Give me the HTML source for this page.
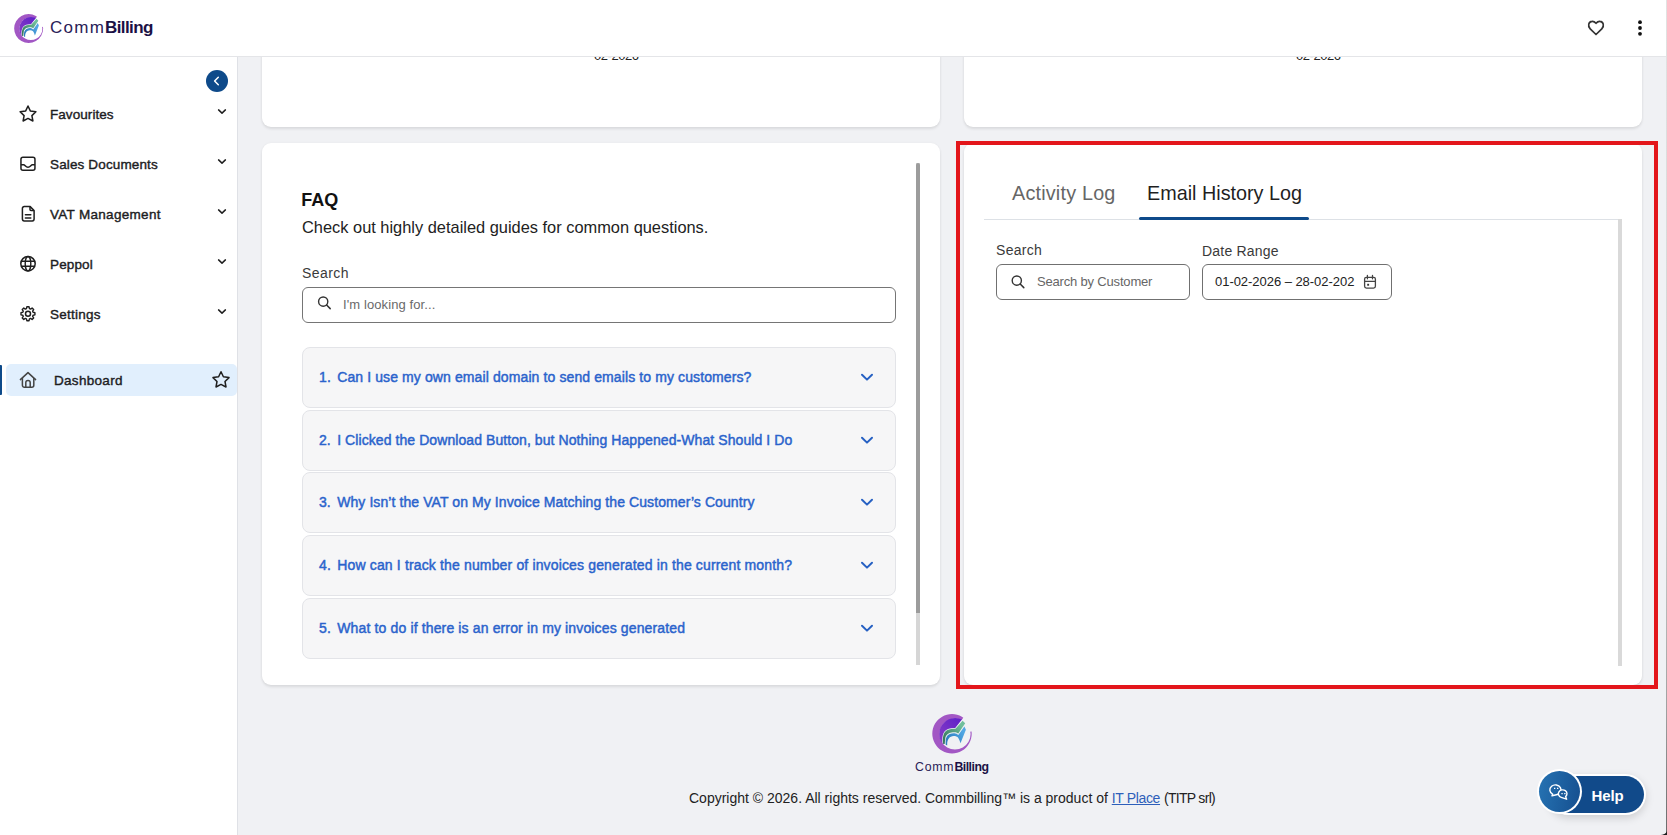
<!DOCTYPE html>
<html><head><meta charset="utf-8">
<style>
*{box-sizing:border-box;margin:0;padding:0}
html,body{width:1667px;height:835px;overflow:hidden;font-family:"Liberation Sans",sans-serif;background:#f0f1f4;color:#1f1f1f}
.abs{position:absolute}
.t{position:absolute;white-space:nowrap;line-height:1}
#hdr{position:absolute;left:0;top:0;width:1667px;height:57px;background:#fff;border-bottom:1px solid #e4e5e8;z-index:10}
#side{position:absolute;left:0;top:57px;width:238px;height:778px;background:#fff;border-right:1px solid #dfe1e6;z-index:5}
.card{position:absolute;background:#fff;border-radius:9px;box-shadow:0 2px 3px rgba(0,0,0,.09),0 0 3px rgba(0,0,0,.04)}
.st{font-size:13.5px;font-weight:normal;color:#1d1d1f;-webkit-text-stroke:0.4px #1d1d1f}
.faq{position:absolute;left:302px;width:594px;height:61px;background:#f6f6f7;border:1px solid #e3e4e8;border-radius:8px}
.q{font-size:14px;font-weight:normal;color:#2a63cc;-webkit-text-stroke:0.45px #2a63cc}
svg{position:absolute;overflow:visible}
</style></head>
<body>
<div id="hdr">
  <svg id="logo1" style="left:10.8px;top:10.5px" width="35.3" height="35.3" viewBox="0 0 48 48">
    <use href="#logo"/>
  </svg>
  <div class="t" id="brand" style="left:50px;top:18.8px;font-size:17px;color:#1b1145"><span style="letter-spacing:1.25px;color:#2a2157">Comm</span><b style="letter-spacing:-0.6px">Billing</b></div>
  <svg style="left:1580px;top:12px" width="32" height="32" viewBox="0 0 32 32"><path d="M16 22.5 L10.2 16.8 C7.4 14 8.6 9.6 12 9.3 C13.8 9.1 15 10.1 16 11.3 C17 10.1 18.2 9.1 20 9.3 C23.4 9.6 24.6 14 21.8 16.8 Z" fill="none" stroke="#333" stroke-width="1.7" stroke-linejoin="round"/></svg>
  <svg style="left:1630px;top:12px" width="20" height="32" viewBox="0 0 20 32"><circle cx="10" cy="10.2" r="1.9" fill="#111"/><circle cx="10" cy="16" r="1.9" fill="#111"/><circle cx="10" cy="21.8" r="1.9" fill="#111"/></svg>
</div>

<svg width="0" height="0" style="left:0;top:0">
  <defs>
    <linearGradient id="gdp" x1="0" y1="1" x2="1" y2="0"><stop offset="0" stop-color="#8a3fc6"/><stop offset="1" stop-color="#5d1fc8"/></linearGradient>
    <linearGradient id="ggr" x1="0.3" y1="0.9" x2="0.8" y2="0.2"><stop offset="0" stop-color="#3a7a60"/><stop offset="1" stop-color="#70bf9c"/></linearGradient>
    <linearGradient id="gbl" x1="0.2" y1="0.8" x2="0.9" y2="0.3"><stop offset="0" stop-color="#2f7fc0"/><stop offset="1" stop-color="#52a8e4"/></linearGradient>
    <mask id="mcut" maskUnits="userSpaceOnUse" x="0" y="0" width="48" height="48">
      <rect x="0" y="0" width="48" height="48" fill="#fff"/>
      <path d="M24 23.7 L47 -9 L70 -9 L70 18.5 Z" fill="#000"/>
    </mask>
    <g id="logo">
      <path mask="url(#mcut)" fill-rule="evenodd" fill="#a257c4" d="M24 4 A19.7 19.7 0 1 1 23.99 4 Z M27 8.4 A15.6 15.6 0 1 0 27.01 8.4 Z"/>
      <path fill="url(#gdp)" d="M33.9 9.57 A16 16 0 0 0 14.6 34 C14 31 13.9 24.3 16.9 21 C19.2 18.6 23.5 17.6 27.2 18 Z"/>
      <path fill="url(#ggr)" d="M15.2 34 C14.6 31 14.5 24.5 17.4 21.5 C19.5 19.3 24 18.4 27.5 18.8 L34.6 10.7 L37.2 13.2 L30.3 23.6 C28.8 22.6 27.6 22.1 26.4 22.2 C24.2 22.2 22.4 22.5 21 23.2 C18.6 24.6 17.4 26.5 17.4 27.6 C17.1 30 16.9 32 16.7 34 Z"/>
      <path fill="url(#gbl)" d="M17.7 34.7 C17.6 32 17.6 30 18.1 28.3 C18.8 26 20 24.8 21.7 24 C23.2 23.3 24.8 23.1 26.4 23.2 C28 23.4 29.3 24 30.3 25 L36.4 16.4 L37.9 19.7 L32.5 33.3 C31.8 30.8 31 29 30 27.6 C28.8 26.5 27.3 26 25.7 26.1 C23.6 26.2 22 27 21 28.3 C19.9 29.7 19.3 31.3 19.2 33 L19.2 35.5 Z"/>
    </g>
  </defs>
</svg>

<div id="side">
  <div class="abs" style="left:206px;top:13px;width:22px;height:22px;border-radius:50%;background:#0e4a8a"><svg style="left:0;top:0" width="22" height="22" viewBox="0 0 22 22"><path d="M12.3 7.2 L8.6 11 L12.3 14.8" stroke="#fff" stroke-width="1.5" fill="none" stroke-linecap="round" stroke-linejoin="round"/></svg></div>

  <!-- star -->
  <svg style="left:15px;top:43px" width="26" height="26" viewBox="0 0 26 26"><path d="M13 6 L15.3 10.9 L20.9 11.7 L16.9 15.6 L17.9 21 L13 18.4 L8.1 21 L9.1 15.6 L5.1 11.7 L10.7 10.9 Z" fill="none" stroke="#1f1f1f" stroke-width="1.5" stroke-linejoin="round"/></svg>
  <div class="t st" style="left:50px;top:51.3px;letter-spacing:0.06px">Favourites</div>
  <svg style="left:215px;top:50px" width="14" height="10" viewBox="0 0 14 10"><path d="M3.6 2.9 L7 6.1 L10.4 2.9" fill="none" stroke="#1f1f1f" stroke-width="1.5" stroke-linecap="round" stroke-linejoin="round"/></svg>

  <!-- inbox -->
  <svg style="left:15px;top:93px" width="26" height="26" viewBox="0 0 26 26"><rect x="5.95" y="7.25" width="14" height="13" rx="2" fill="none" stroke="#1f1f1f" stroke-width="1.5"/><path d="M5.95 14.7 H8.6 C10 14.7 10.6 17.3 13 17.3 C15.4 17.3 16 14.7 17.4 14.7 H19.95" fill="none" stroke="#1f1f1f" stroke-width="1.5"/></svg>
  <div class="t st" style="left:50px;top:101.3px;letter-spacing:0.14px">Sales Documents</div>
  <svg style="left:215px;top:100px" width="14" height="10" viewBox="0 0 14 10"><path d="M3.6 2.9 L7 6.1 L10.4 2.9" fill="none" stroke="#1f1f1f" stroke-width="1.5" stroke-linecap="round" stroke-linejoin="round"/></svg>

  <!-- doc -->
  <svg style="left:15px;top:143px" width="26" height="26" viewBox="0 0 26 26"><path d="M9 6.6 H15.2 L19.1 10.5 V19.1 A1.8 1.8 0 0 1 17.3 20.9 H9.2 A1.8 1.8 0 0 1 7.4 19.1 V8.4 A1.8 1.8 0 0 1 9.2 6.6 Z" fill="none" stroke="#1f1f1f" stroke-width="1.5" stroke-linejoin="round"/><path d="M15 6.8 V9.4 A1 1 0 0 0 16 10.4 H19" fill="none" stroke="#1f1f1f" stroke-width="1.5"/><path d="M10.4 14.8 H15.8 M10.4 18.1 H15.8" stroke="#1f1f1f" stroke-width="1.5" stroke-linecap="round"/></svg>
  <div class="t st" style="left:50px;top:151.3px;letter-spacing:0.30px">VAT Management</div>
  <svg style="left:215px;top:150px" width="14" height="10" viewBox="0 0 14 10"><path d="M3.6 2.9 L7 6.1 L10.4 2.9" fill="none" stroke="#1f1f1f" stroke-width="1.5" stroke-linecap="round" stroke-linejoin="round"/></svg>

  <!-- globe -->
  <svg style="left:15px;top:193px" width="26" height="26" viewBox="0 0 26 26"><circle cx="13" cy="13.7" r="7.2" fill="none" stroke="#1f1f1f" stroke-width="1.5"/><ellipse cx="13" cy="13.7" rx="2.8" ry="7.2" fill="none" stroke="#1f1f1f" stroke-width="1.4"/><path d="M6.2 11.2 H19.8 M6.2 16.3 H19.8" stroke="#1f1f1f" stroke-width="1.4"/></svg>
  <div class="t st" style="left:50px;top:201.3px;letter-spacing:0.14px">Peppol</div>
  <svg style="left:215px;top:200px" width="14" height="10" viewBox="0 0 14 10"><path d="M3.6 2.9 L7 6.1 L10.4 2.9" fill="none" stroke="#1f1f1f" stroke-width="1.5" stroke-linecap="round" stroke-linejoin="round"/></svg>

  <!-- gear -->
  <svg style="left:15px;top:243px" width="26" height="26" viewBox="0 0 26 26"><path d="M11.85 6.79 L14.05 6.79 L14.44 8.61 L15.53 9.06 L17.09 8.05 L18.65 9.61 L17.64 11.17 L18.09 12.26 L19.91 12.65 L19.91 14.85 L18.09 15.24 L17.64 16.33 L18.65 17.89 L17.09 19.45 L15.53 18.44 L14.44 18.89 L14.05 20.71 L11.85 20.71 L11.46 18.89 L10.37 18.44 L8.81 19.45 L7.25 17.89 L8.26 16.33 L7.81 15.24 L5.99 14.85 L5.99 12.65 L7.81 12.26 L8.26 11.17 L7.25 9.61 L8.81 8.05 L10.37 9.06 L11.46 8.61 Z" fill="none" stroke="#1f1f1f" stroke-width="1.4" stroke-linejoin="round"/><circle cx="13" cy="13.8" r="2.5" fill="none" stroke="#1f1f1f" stroke-width="1.5"/></svg>
  <div class="t st" style="left:50px;top:251.3px;letter-spacing:0.23px">Settings</div>
  <svg style="left:215px;top:250px" width="14" height="10" viewBox="0 0 14 10"><path d="M3.6 2.9 L7 6.1 L10.4 2.9" fill="none" stroke="#1f1f1f" stroke-width="1.5" stroke-linecap="round" stroke-linejoin="round"/></svg>

  <div class="abs" style="left:6px;top:307px;width:231px;height:32px;background:#e1effd;border-radius:5px"></div>
  <div class="abs" style="left:0;top:308px;width:2px;height:30px;background:#0e4a8a;border-radius:0 1px 1px 0"></div>
  <svg style="left:15px;top:309px" width="26" height="26" viewBox="0 0 26 26"><path d="M5.4 13.6 L13 6.6 L20.6 13.6" fill="none" stroke="#444" stroke-width="1.5" stroke-linecap="round" stroke-linejoin="round"/><path d="M7.4 12 V19.2 A2 2 0 0 0 9.4 21.2 H16.8 A2 2 0 0 0 18.8 19.2 V12" fill="none" stroke="#444" stroke-width="1.5"/><path d="M10.8 21.2 V16.6 A2.2 2.2 0 0 1 15.2 16.6 V21.2" fill="none" stroke="#444" stroke-width="1.5"/></svg>
  <div class="t st" style="left:54px;top:317.3px;letter-spacing:0.30px">Dashboard</div>
  <svg style="left:208px;top:309px" width="26" height="26" viewBox="0 0 26 26"><path d="M13 5.8 L15.4 10.8 L21 11.6 L17 15.5 L18 21 L13 18.4 L8 21 L9 15.5 L5 11.6 L10.6 10.8 Z" fill="none" stroke="#1f1f1f" stroke-width="1.5" stroke-linejoin="round"/></svg>
</div>

<!-- top cards -->
<div class="card" style="left:262px;top:0;width:678px;height:127px;overflow:hidden"><div class="t" style="left:332px;top:49px;font-size:13px;color:#222;letter-spacing:-0.45px">02-2026</div></div>
<div class="card" style="left:964px;top:0;width:678px;height:127px;overflow:hidden"><div class="t" style="left:332px;top:49px;font-size:13px;color:#222;letter-spacing:-0.45px">02-2026</div></div>

<!-- FAQ card -->
<div class="card" style="left:262px;top:143px;width:678px;height:542px"></div>
<div class="abs" style="left:916px;top:163px;width:4px;height:502px;background:#d6d6d6"></div>
<div class="abs" style="left:916px;top:163px;width:4px;height:450px;background:#9c9c9c;border-radius:2px 2px 0 0"></div>
<div class="t" style="left:301.2px;top:191px;font-size:18px;font-weight:bold;color:#111">FAQ</div>
<div class="t" style="left:302px;top:219px;font-size:16.4px;color:#222">Check out highly detailed guides for common questions.</div>
<div class="t" style="left:302px;top:266px;font-size:14px;color:#3a3a3a;letter-spacing:0.44px">Search</div>
<div class="abs" style="left:302px;top:287px;width:594px;height:36px;border:1px solid #757575;border-radius:6px"></div>
<svg style="left:310px;top:288px" width="30" height="30" viewBox="0 0 30 30"><circle cx="13.2" cy="13.6" r="4.6" fill="none" stroke="#333" stroke-width="1.4"/><path d="M16.6 17 L20.2 20.6" stroke="#333" stroke-width="1.5" stroke-linecap="round"/></svg>
<div class="t" style="left:343px;top:298px;font-size:13px;color:#6a6a6a;letter-spacing:0.1px">I'm looking for...</div>

<div class="faq" style="top:347px"></div>
<div class="faq" style="top:410px"></div>
<div class="faq" style="top:472px"></div>
<div class="faq" style="top:535px"></div>
<div class="faq" style="top:598px"></div>
<div class="t q" style="left:319px;top:370px;letter-spacing:0.108px">1.<span style="letter-spacing:-0.75px">&nbsp; </span>Can I use my own email domain to send emails to my customers?</div>
<div class="t q" style="left:319px;top:433px;letter-spacing:0.078px">2.<span style="letter-spacing:-0.75px">&nbsp; </span>I Clicked the Download Button, but Nothing Happened-What Should I Do</div>
<div class="t q" style="left:319px;top:495px;letter-spacing:0.088px">3.<span style="letter-spacing:-0.75px">&nbsp; </span>Why Isn’t the VAT on My Invoice Matching the Customer’s Country</div>
<div class="t q" style="left:319px;top:558px;letter-spacing:0.15px">4.<span style="letter-spacing:-0.75px">&nbsp; </span>How can I track the number of invoices generated in the current month?</div>
<div class="t q" style="left:319px;top:621px;letter-spacing:0.14px">5.<span style="letter-spacing:-0.75px">&nbsp; </span>What to do if there is an error in my invoices generated</div>
<svg style="left:857px;top:368px" width="20" height="20" viewBox="0 0 20 20"><path d="M5 6.8 L10 11.6 L15 6.8" fill="none" stroke="#2761c3" stroke-width="2" stroke-linecap="round" stroke-linejoin="round"/></svg>
<svg style="left:857px;top:431px" width="20" height="20" viewBox="0 0 20 20"><path d="M5 6.8 L10 11.6 L15 6.8" fill="none" stroke="#2761c3" stroke-width="2" stroke-linecap="round" stroke-linejoin="round"/></svg>
<svg style="left:857px;top:493px" width="20" height="20" viewBox="0 0 20 20"><path d="M5 6.8 L10 11.6 L15 6.8" fill="none" stroke="#2761c3" stroke-width="2" stroke-linecap="round" stroke-linejoin="round"/></svg>
<svg style="left:857px;top:556px" width="20" height="20" viewBox="0 0 20 20"><path d="M5 6.8 L10 11.6 L15 6.8" fill="none" stroke="#2761c3" stroke-width="2" stroke-linecap="round" stroke-linejoin="round"/></svg>
<svg style="left:857px;top:619px" width="20" height="20" viewBox="0 0 20 20"><path d="M5 6.8 L10 11.6 L15 6.8" fill="none" stroke="#2761c3" stroke-width="2" stroke-linecap="round" stroke-linejoin="round"/></svg>

<!-- Email card -->
<div class="card" style="left:964px;top:143px;width:678px;height:542px"></div>
<div class="abs" style="left:984px;top:219px;width:634px;height:1px;background:#dde1e6"></div>
<div class="abs" style="left:1618px;top:219px;width:4px;height:447px;background:#d9d9d9"></div>
<div class="t" style="left:1012px;top:183.7px;font-size:19.8px;color:#666;letter-spacing:0.2px">Activity Log</div>
<div class="t" style="left:1147px;top:183.7px;font-size:19.8px;color:#1f1f1f">Email History Log</div>
<div class="abs" style="left:1139px;top:217px;width:170px;height:3px;background:#0e4a8a;border-radius:2px"></div>
<div class="t" style="left:996px;top:243px;font-size:14px;color:#3a3a3a;letter-spacing:0.3px">Search</div>
<div class="abs" style="left:996px;top:264px;width:194px;height:36px;border:1px solid #707070;border-radius:6px"></div>
<svg style="left:1003px;top:267px" width="30" height="30" viewBox="0 0 30 30"><circle cx="13.8" cy="13.6" r="4.6" fill="none" stroke="#333" stroke-width="1.4"/><path d="M17.2 17 L20.8 20.6" stroke="#333" stroke-width="1.5" stroke-linecap="round"/></svg>
<div class="t" style="left:1037px;top:275px;font-size:13px;color:#666;letter-spacing:-0.18px">Search by Customer</div>
<div class="t" style="left:1202px;top:243.5px;font-size:14px;color:#3a3a3a;letter-spacing:0.2px">Date Range</div>
<div class="abs" style="left:1202px;top:264px;width:190px;height:36px;border:1px solid #707070;border-radius:6px"></div>
<div class="t" style="left:1215px;top:275px;font-size:13px;color:#222;letter-spacing:-0.04px">01-02-2026 – 28-02-202</div>
<svg style="left:1355px;top:270px" width="30" height="24" viewBox="0 0 30 24"><rect x="9.6" y="7.3" width="10.8" height="10.8" rx="1.8" fill="none" stroke="#444" stroke-width="1.3"/><path d="M9.6 11.3 H20.4 M12.4 5.4 V8.8 M17.5 5.4 V8.8" stroke="#444" stroke-width="1.3" stroke-linecap="round"/><rect x="12.2" y="13.8" width="1.9" height="1.9" fill="#333"/></svg>

<div class="abs" style="left:956px;top:141px;width:702px;height:548px;border:4px solid #e3161b"></div>

<!-- footer -->
<svg style="left:928px;top:710px" width="48" height="48" viewBox="0 0 48 48"><use href="#logo"/></svg>
<div class="t" id="brand2" style="left:915px;top:761px;font-size:12.3px;color:#1b1145"><span style="letter-spacing:0.8px;color:#2a2157">Comm</span><b style="letter-spacing:-0.5px">Billing</b></div>
<div class="t" style="left:689px;top:790.5px;font-size:14px;color:#222;letter-spacing:0px">Copyright © 2026. All rights reserved. Commbilling™ is a product of <span style="color:#2e5fba;text-decoration:underline;letter-spacing:-0.35px">IT Place</span> <span style="letter-spacing:-0.7px">(TITP srl)</span></div>

<!-- help -->
<div class="abs" style="left:1548px;top:773.5px;width:98px;height:41.5px;border-radius:21px;background:#fff;box-shadow:0 3px 8px rgba(0,0,0,.15)"></div>
<div class="abs" style="left:1550px;top:775.8px;width:94px;height:37px;border-radius:19px;background:#114a8a"></div>
<div class="t" style="left:1591.5px;top:787.5px;font-size:15px;font-weight:bold;letter-spacing:-0.1px;color:#fff">Help</div>
<div class="abs" style="left:1537px;top:769px;width:45px;height:45px;border-radius:50%;background:#fff"></div>
<div class="abs" style="left:1539px;top:771px;width:41px;height:41px;border-radius:50%;background:linear-gradient(100deg,#2673b3,#154f8f)"></div>
<svg style="left:1539px;top:771px" width="41" height="41" viewBox="0 0 41 41"><path d="M13.6 23.2 A5.6 5 0 1 1 17.4 23.8 L13 24.8 Z" fill="none" stroke="#fff" stroke-width="1.4" stroke-linejoin="round"/><path d="M22.2 26.4 L27.6 28.2 L26.6 25.6 A4.3 3.9 0 1 0 22.2 26.4 Z" fill="#1b5c9c" stroke="#fff" stroke-width="1.4" stroke-linejoin="round"/><path d="M15 17.4 h1.3 M18 17.4 h1.3 M22.4 22.6 h1.3 M25.2 22.6 h1.3" stroke="#fff" stroke-width="1.2"/></svg>

<div class="abs" style="left:1666px;top:0;width:1px;height:835px;z-index:20;background:linear-gradient(#e2e2e2,#d0d0d0 60%,#a0a0a0 85%,#6a6a6a)"></div>
<svg style="left:1655px;top:823px;z-index:21" width="12" height="12" viewBox="0 0 12 12"><path d="M12 7.5 C12 10 9 12 4 12 L12 12 Z" fill="#1e1e1e"/></svg>
</body></html>
